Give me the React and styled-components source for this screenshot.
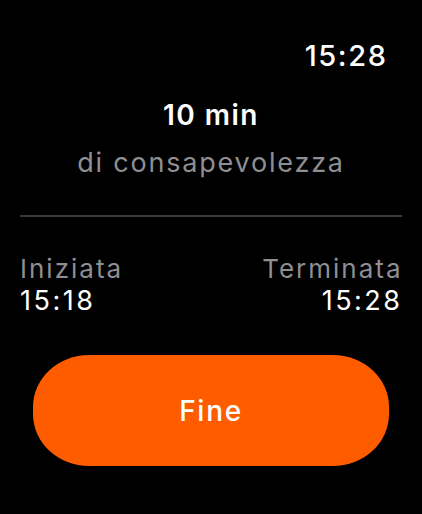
import React from "react";
import styled, { createGlobalStyle } from "styled-components";

const Global = createGlobalStyle`
  html, body { margin: 0; padding: 0; background: #000; }
  body { font-family: Inter, "Noto Sans", sans-serif; -webkit-font-smoothing: antialiased; }
`;

const Screen = styled.div`
  width: 422px;
  height: 514px;
  background: #000;
  color: #fff;
  display: flex;
  flex-direction: column;
  box-sizing: border-box;
  padding: 0 20px;
  overflow: hidden;
`;

const StatusBar = styled.div`
  display: flex;
  justify-content: flex-end;
  padding: 38px 16px 0 0;
`;

const Clock = styled.div`
  font-size: 29px;
  font-weight: 500;
  line-height: 36px;
  letter-spacing: 1.6px;
  margin-right: -1.6px;
`;

const Summary = styled.div`
  display: flex;
  flex-direction: column;
  align-items: center;
  margin-top: 21px;
`;

const Duration = styled.div`
  font-size: 28px;
  font-weight: 600;
  line-height: 40px;
  letter-spacing: 1.5px;
`;

const Caption = styled.div`
  font-size: 27px;
  font-weight: 400;
  color: #8e8e93;
  line-height: 40px;
  margin-top: 8px;
  letter-spacing: 1.8px;
`;

const Divider = styled.hr`
  border: none;
  height: 2px;
  background: #3a3a3c;
  margin: 32px 0 0;
  width: 100%;
`;

const Times = styled.div`
  display: flex;
  justify-content: space-between;
  margin-top: 36px;
`;

const TimeCol = styled.div`
  display: flex;
  flex-direction: column;
  align-items: ${(p) => (p.$end ? "flex-end" : "flex-start")};
  margin-right: ${(p) => (p.$end ? "-0.5px" : "0")};
`;

const TimeLabel = styled.div`
  font-size: 26px;
  color: #8e8e93;
  line-height: 32px;
  letter-spacing: 2px;
`;

const TimeValue = styled.div`
  font-size: 27px;
  color: #fff;
  line-height: 32px;
  letter-spacing: 2.5px;
`;

const Button = styled.button`
  margin: 38px 13px 0;
  height: 111px;
  border: none;
  border-radius: 56px / 52px;
  background: #ff5c00;
  color: #fff;
  font-family: inherit;
  font-size: 28px;
  font-weight: 500;
  letter-spacing: 1.7px;
  cursor: pointer;
`;

export default function App() {
  return (
    <>
      <Global />
      <Screen>
        <StatusBar>
          <Clock>15:28</Clock>
        </StatusBar>
        <Summary>
          <Duration>10 min</Duration>
          <Caption>di consapevolezza</Caption>
        </Summary>
        <Divider />
        <Times>
          <TimeCol>
            <TimeLabel>Iniziata</TimeLabel>
            <TimeValue>15:18</TimeValue>
          </TimeCol>
          <TimeCol $end>
            <TimeLabel>Terminata</TimeLabel>
            <TimeValue>15:28</TimeValue>
          </TimeCol>
        </Times>
        <Button>Fine</Button>
      </Screen>
    </>
  );
}
